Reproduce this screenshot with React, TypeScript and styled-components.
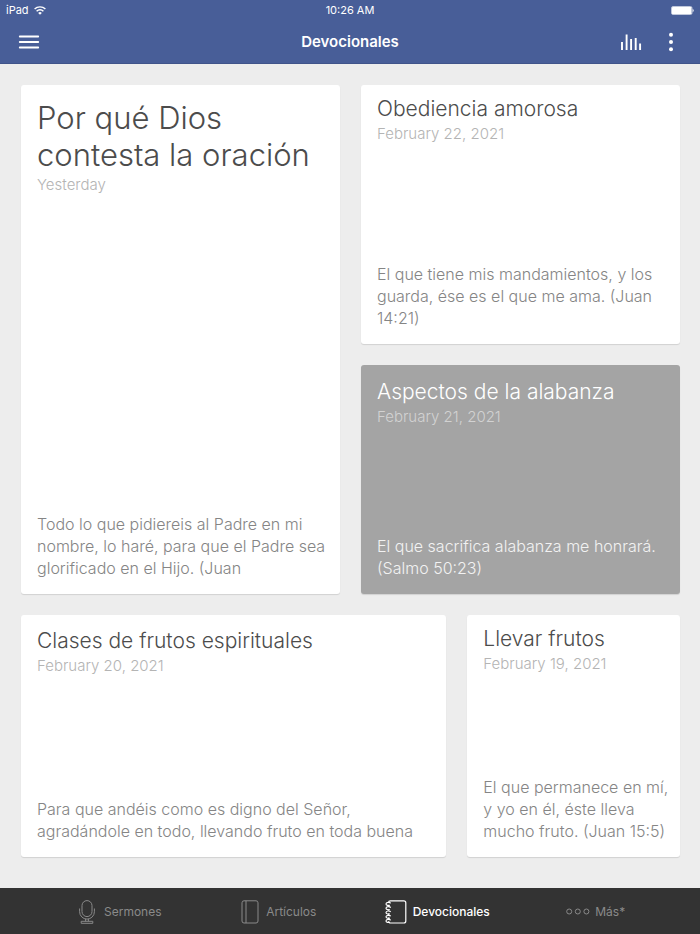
import React from "react";
import styled, { createGlobalStyle } from "styled-components";

const GlobalStyle = createGlobalStyle`
  *, *::before, *::after { box-sizing: border-box; }
  body {
    margin: 0;
    background: #ededed;
    font-family: Inter, "Liberation Sans", sans-serif;
    -webkit-font-smoothing: antialiased;
  }
  h1, h2, p { margin: 0; font-weight: inherit; }
  button { border: 0; padding: 0; background: none; color: inherit; font: inherit; cursor: pointer; }
  svg { display: block; }
`;

const Screen = styled.div`
  display: flex;
  flex-direction: column;
  min-height: 100vh;
`;

const Header = styled.header`
  background: #485e98;
  color: #fff;
  box-shadow: inset 0 -1px 0 #40548a;
`;

const StatusBar = styled.div`
  display: grid;
  grid-template-columns: 1fr auto 1fr;
  align-items: center;
  height: 20px;
  padding: 0 6px;
  font-size: 11px;
  line-height: 20px;
`;

const Carrier = styled.div`
  display: flex;
  align-items: center;
  gap: 5px;
`;

const Battery = styled.div`
  justify-self: end;
`;

const NavBar = styled.div`
  display: grid;
  grid-template-columns: 1fr auto 1fr;
  align-items: center;
  height: 44px;
  padding: 0 18px;
`;

const PageTitle = styled.h1`
  font-size: 15px;
  font-weight: 600;
  line-height: 20px;
`;

const Actions = styled.div`
  display: flex;
  justify-content: flex-end;
  gap: 18px;
`;

const IconButton = styled.button`
  display: flex;
  align-items: center;
  justify-content: center;
  width: 22px;
`;

const Board = styled.main`
  flex: 1;
  display: grid;
  grid-template-rows: 509fr 242fr;
  gap: 21px;
  padding: 21px 20px 31px 21px;
`;

const Row = styled.div<{ $columns: string }>`
  display: grid;
  grid-template-columns: ${(p) => p.$columns};
  gap: 21px;
`;

const Stack = styled.div`
  display: grid;
  grid-template-rows: 260fr 230fr;
  gap: 21px;
`;

const CardBox = styled.article<{ $dark?: boolean; $top: number }>`
  display: flex;
  flex-direction: column;
  justify-content: space-between;
  gap: 16px;
  min-width: 0;
  padding: ${(p) => p.$top}px 10px 15px 16px;
  border-radius: 3px;
  box-shadow: 0 1px 1px rgba(0, 0, 0, 0.12);
  font-weight: 300;
  background: ${(p) => (p.$dark ? "#a4a4a4" : "#fff")};
  color: ${(p) => (p.$dark ? "#fff" : "#4c4c4c")};
`;

const CardTitle = styled.h2<{ $large?: boolean }>`
  font-size: ${(p) => (p.$large ? 31 : 21)}px;
  line-height: ${(p) => (p.$large ? 37 : 26)}px;
`;

const CardDate = styled.p<{ $dark?: boolean }>`
  font-size: 15px;
  line-height: 24px;
  color: ${(p) => (p.$dark ? "#d2d2d2" : "#b4b4b4")};
`;

const Verse = styled.p<{ $dark?: boolean }>`
  font-size: 16px;
  line-height: 22px;
  color: ${(p) => (p.$dark ? "#f2f2f2" : "#858585")};
`;

const TabBar = styled.nav`
  display: grid;
  grid-template-columns: repeat(4, 1fr);
  height: 46px;
  padding: 2px 25px 0 41px;
  background: #333;
`;

const Tab = styled.button<{ $active?: boolean; $gap: number }>`
  && {
    display: flex;
    align-items: center;
    justify-content: center;
    gap: ${(p) => p.$gap}px;
    color: ${(p) => (p.$active ? "#fff" : "#8a8a8a")};
    font-size: 12px;
    font-weight: ${(p) => (p.$active ? 500 : 400)};
    line-height: 16px;
  }
`;

interface CardProps {
  title: string;
  date: string;
  verse: string;
  top: number;
  large?: boolean;
  dark?: boolean;
}

function Card({ title, date, verse, top, large, dark }: CardProps) {
  return (
    <CardBox $dark={dark} $top={top}>
      <div>
        <CardTitle $large={large}>{title}</CardTitle>
        <CardDate $dark={dark}>{date}</CardDate>
      </div>
      <Verse $dark={dark}>{verse}</Verse>
    </CardBox>
  );
}

const WifiIcon = () => (
  <svg width="12" height="9" viewBox="0 0 12 9" fill="none" stroke="currentColor" strokeWidth="1.4" aria-hidden="true">
    <path d="M.6 3.1a7.6 7.6 0 0 1 10.8 0M2.6 5.2a4.8 4.8 0 0 1 6.8 0" />
    <path d="M6 8.8 4.2 7a2.5 2.5 0 0 1 3.6 0Z" fill="currentColor" stroke="none" />
  </svg>
);

const BatteryIcon = () => (
  <svg width="23" height="9" viewBox="0 0 23 9" fill="none" aria-hidden="true">
    <rect x=".5" y=".5" width="20.5" height="8" rx="1.5" stroke="#fff" strokeOpacity=".65" />
    <rect x="1" y="1" width="19.5" height="7" rx=".6" fill="#fff" />
    <path d="M21.6 3v3c1.6-.4 1.6-2.6 0-3Z" fill="#fff" fillOpacity=".8" />
  </svg>
);

const MenuIcon = () => (
  <svg width="22" height="16" viewBox="0 0 22 16" stroke="currentColor" strokeWidth="1.9" strokeLinecap="round" aria-hidden="true">
    <path d="M1.8 2.5h18.4M1.8 8h18.4M1.8 13.5h18.4" />
  </svg>
);

const BarsIcon = () => (
  <svg width="22" height="18" viewBox="0 0 22 18" stroke="currentColor" strokeWidth="1.9" aria-hidden="true">
    <path d="M2 17V9M6.6 17V1.5M11.1 17V6M15.7 17V5M20.1 17v-6.5" />
  </svg>
);

const MoreIcon = () => (
  <svg width="6" height="20" viewBox="0 0 6 20" fill="currentColor" aria-hidden="true">
    <circle cx="3" cy="2.8" r="2" />
    <circle cx="3" cy="10" r="2" />
    <circle cx="3" cy="17.2" r="2" />
  </svg>
);

const MicIcon = () => (
  <svg width="16" height="24" viewBox="0 0 16 24" fill="none" stroke="currentColor" aria-hidden="true">
    <rect x="3" y=".6" width="10" height="16" rx="5" />
    <path d="M.6 8.5v3.2a7.4 7.4 0 0 0 14.8 0V8.5M6.6 19v2.3M9.4 19v2.3M2.2 21.3h11.6v2H2.2z" />
  </svg>
);

const BookIcon = () => (
  <svg width="18" height="24" viewBox="0 0 18 24" fill="none" stroke="currentColor" aria-hidden="true">
    <rect x="1" y=".8" width="16" height="22.2" rx="2" />
    <path d="M5 .8V23" />
  </svg>
);

const NotebookIcon = () => (
  <svg width="22" height="24" viewBox="0 0 22 24" fill="none" stroke="currentColor" strokeWidth="1.2" aria-hidden="true">
    <path d="M3.6 2.6C3.6 1.4 4.4.8 5.4.8h13.4c1.2 0 2 .8 2 2V21c0 1.2-.8 2-2 2H5.4c-1 0-1.8-.6-1.8-1.8M3.6 5v1.8M3.6 9.4v1.2M3.6 13.4v1.4M3.6 17.4v1.2" />
    <path d="M5.6 3.4C5 1.9 1 2.1 1 3.9s2.6 1.7 3.8 1.3M5.6 7.7C5 6.2 1 6.4 1 8.2s2.6 1.7 3.8 1.3M5.6 12C5 10.5 1 10.7 1 12.5s2.6 1.7 3.8 1.3M5.6 16.3C5 14.8 1 15 1 16.8s2.6 1.7 3.8 1.3M5.6 20.4C5 18.9 1 19.1 1 20.9s2.6 1.7 3.8 1.3" />
  </svg>
);

const RingsIcon = () => (
  <svg width="24" height="8" viewBox="0 0 24 8" fill="none" stroke="currentColor" aria-hidden="true">
    <circle cx="3.2" cy="3.5" r="2.5" />
    <circle cx="11.8" cy="3.5" r="2.5" />
    <circle cx="20.4" cy="3.5" r="2.5" />
  </svg>
);

export default function App() {
  return (
    <Screen>
      <GlobalStyle />
      <Header>
        <StatusBar>
          <Carrier>
            iPad <WifiIcon />
          </Carrier>
          <time>10:26 AM</time>
          <Battery>
            <BatteryIcon />
          </Battery>
        </StatusBar>
        <NavBar>
          <IconButton aria-label="Menú">
            <MenuIcon />
          </IconButton>
          <PageTitle>Devocionales</PageTitle>
          <Actions>
            <IconButton aria-label="Audio">
              <BarsIcon />
            </IconButton>
            <IconButton aria-label="Opciones">
              <MoreIcon />
            </IconButton>
          </Actions>
        </NavBar>
      </Header>
      <Board>
        <Row $columns="1fr 1fr">
          <Card
            large
            top={14}
            title="Por qué Dios contesta la oración"
            date="Yesterday"
            verse="Todo lo que pidiereis al Padre en mi nombre, lo haré, para que el Padre sea glorificado en el Hijo. (Juan"
          />
          <Stack>
            <Card
              top={11}
              title="Obediencia amorosa"
              date="February 22, 2021"
              verse="El que tiene mis mandamientos, y los guarda, ése es el que me ama. (Juan 14:21)"
            />
            <Card
              dark
              top={14}
              title="Aspectos de la alabanza"
              date="February 21, 2021"
              verse="El que sacrifica alabanza me honrará. (Salmo 50:23)"
            />
          </Stack>
        </Row>
        <Row $columns="2fr 1fr">
          <Card
            top={13}
            title="Clases de frutos espirituales"
            date="February 20, 2021"
            verse="Para que andéis como es digno del Señor, agradándole en todo, llevando fruto en toda buena"
          />
          <Card
            top={11}
            title="Llevar frutos"
            date="February 19, 2021"
            verse="El que permanece en mí, y yo en él, éste lleva mucho fruto. (Juan 15:5)"
          />
        </Row>
      </Board>
      <TabBar>
        <Tab $gap={9}>
          <MicIcon /> Sermones
        </Tab>
        <Tab $gap={7}>
          <BookIcon /> Artículos
        </Tab>
        <Tab $gap={6} $active aria-current="page">
          <NotebookIcon /> Devocionales
        </Tab>
        <Tab $gap={5}>
          <RingsIcon /> Más*
        </Tab>
      </TabBar>
    </Screen>
  );
}
